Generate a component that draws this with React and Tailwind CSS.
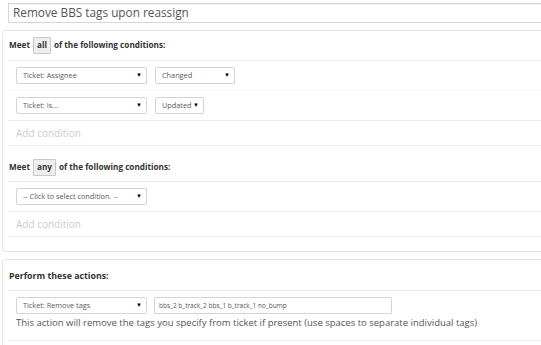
import React from 'react';

function Select({ label, width }) {
  return (
    <div
      className={`flex h-[17px] items-center justify-between rounded-[2px] border border-[#d4d4d4] bg-white pl-[6px] pr-[4px] text-[7.3px] text-[#5a5a5a] ${width}`}
    >
      <span>{label}</span>
      <span className="text-[6px] text-black">▼</span>
    </div>
  );
}

function Header({ pre, word, post, className = '' }) {
  return (
    <div className={`flex items-center border-b border-[#ebebeb] pl-[1px] text-[8.2px] font-bold text-[#333] ${className}`}>
      <span>{pre}</span>
      <span className="mx-[3px] flex h-[17px] items-center rounded-[1px] border border-[#c8c8c8] bg-[#eee] px-[3px]">{word}</span>
      <span>{post}</span>
    </div>
  );
}

function Row({ children, faint }) {
  return (
    <div className={`flex h-[30px] items-center gap-[8px] border-b pl-[8px] ${faint ? 'border-[#f4f4f4]' : 'border-[#ebebeb]'}`}>
      {children}
    </div>
  );
}

function AddCondition() {
  return (
    <div className="flex h-[25px] items-center border-b border-[#ebebeb] pl-[8px] text-[10px] text-[#ccc]">
      Add condition
    </div>
  );
}

export default function App() {
  return (
    <div className="h-[345px] w-[541px] overflow-hidden bg-white" style={{ fontFamily: '"Open Sans", sans-serif' }}>
      <div className="w-[560px]">
        <div className="ml-[8px] mt-[3px] flex h-[20px] items-center border border-[#d6d6d6] pl-[4px] text-[11.8px] text-[#555] shadow-[inset_0_1px_1px_rgba(0,0,0,0.06)]">
          Remove BBS tags upon reassign
        </div>

        <div className="ml-[2px] mt-[7px] rounded-[3px] border border-[#e4e4e4] pb-[14px] pl-[5px]">
          <Header className="h-[30px]" pre="Meet" word="all" post="of the following conditions:" />
          <Row faint>
            <Select label="Ticket: Assignee" width="w-[131px]" />
            <Select label="Changed" width="w-[80px]" />
          </Row>
          <Row>
            <Select label="Ticket: Is..." width="w-[131px]" />
            <Select label="Updated" width="w-[49px]" />
          </Row>
          <AddCondition />
          <Header className="h-[36px] pt-[7px]" pre="Meet" word="any" post="of the following conditions:" />
          <Row>
            <Select label="-- Click to select condition. --" width="w-[131px]" />
          </Row>
          <AddCondition />
        </div>

        <div className="ml-[2px] mt-[7px] rounded-[3px] border border-[#e4e4e4] pl-[5px]">
          <div className="flex h-[31px] items-center border-b border-[#ebebeb] pl-[1px] pt-[3px] text-[8.8px] font-bold text-[#333]">
            Perform these actions:
          </div>
          <div className="flex h-[50px] flex-col border-b border-[#ebebeb] pl-[8px] pt-[6px]">
            <div className="flex gap-[7px]">
              <Select label="Ticket: Remove tags" width="w-[131px]" />
              <div className="flex h-[17px] w-[238px] items-center rounded-[1px] border border-[#d4d4d4] pl-[4px] text-[6.5px] text-[#555]">
                bbs_2 b_track_2 bbs_1 b_track_1 no_bump
              </div>
            </div>
            <div className="mt-[2px] text-[9.5px] text-[#555]">
              This action will remove the tags you specify from ticket if present (use spaces to separate individual tags)
            </div>
          </div>
          <div className="h-[20px]" />
        </div>
      </div>
    </div>
  );
}
